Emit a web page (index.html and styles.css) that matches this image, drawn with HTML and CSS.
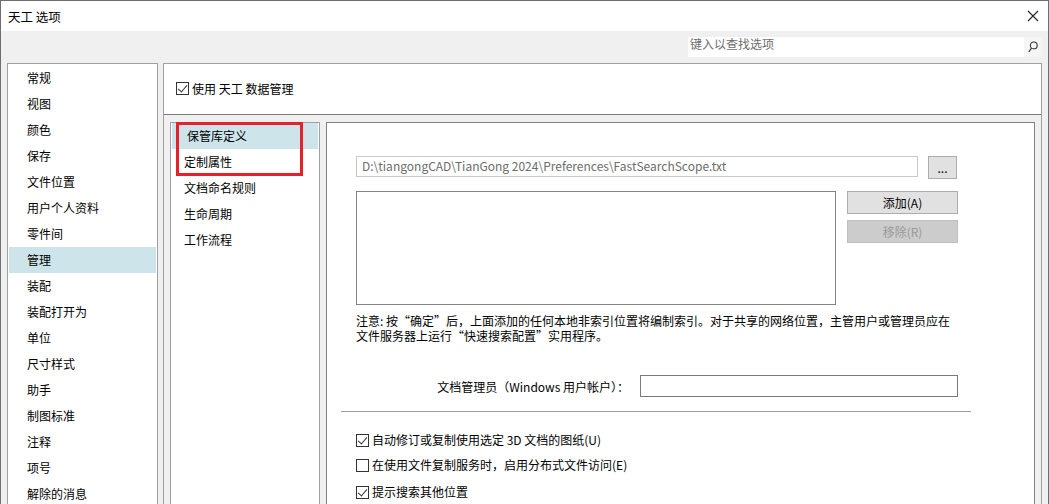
FILE: index.html
```html
<!DOCTYPE html>
<html lang="zh-CN">
<head>
    <meta charset="UTF-8">
    <title>天工 选项</title>
    <link rel="stylesheet" href="styles.css">
</head>
<body>
    <div class="titlebar">
        <span class="title">天工 选项</span>
        <svg class="close-icon" width="12" height="12" viewBox="0 0 12 12">
            <path d="M1 1 L11 11 M11 1 L1 11" stroke="#222" stroke-width="1.1" fill="none"/>
        </svg>
    </div>
    <div class="toolbar">
        <div class="search-box">
            <span class="search-text">键入以查找选项</span>
            <span class="search-btn">
                <svg width="10" height="12" viewBox="0 0 10 12">
                    <circle cx="5.8" cy="4.4" r="3.4" stroke="#333" stroke-width="1.1" fill="none"/>
                    <path d="M3.6 7 L0.8 10.8" stroke="#333" stroke-width="1.2"/>
                </svg>
            </span>
        </div>
    </div>
    <div class="main">
        <div class="nav-panel">
            <div class="nav-item">常规</div>
            <div class="nav-item">视图</div>
            <div class="nav-item">颜色</div>
            <div class="nav-item">保存</div>
            <div class="nav-item">文件位置</div>
            <div class="nav-item">用户个人资料</div>
            <div class="nav-item">零件间</div>
            <div class="nav-item selected">管理</div>
            <div class="nav-item">装配</div>
            <div class="nav-item">装配打开为</div>
            <div class="nav-item">单位</div>
            <div class="nav-item">尺寸样式</div>
            <div class="nav-item">助手</div>
            <div class="nav-item">制图标准</div>
            <div class="nav-item">注释</div>
            <div class="nav-item">项号</div>
            <div class="nav-item">解除的消息</div>
        </div>
        <div class="content-panel">
            <div class="content-head">
                <label class="check-row">
                    <span class="check checked"></span>使用 天工 数据管理
                </label>
            </div>
            <div class="content-body">
                <div class="sub-nav">
                    <div class="sub-item selected">保管库定义</div>
                    <div class="sub-item">定制属性</div>
                    <div class="sub-item">文档命名规则</div>
                    <div class="sub-item">生命周期</div>
                    <div class="sub-item">工作流程</div>
                    <div class="highlight-box"></div>
                </div>
                <div class="sub-page">
                    <div class="path-row">
                        <div class="path-field">D:\tiangongCAD\TianGong 2024\Preferences\FastSearchScope.txt</div>
                        <button class="btn btn-browse">...</button>
                    </div>
                    <div class="list-row">
                        <div class="list-box"></div>
                        <div class="list-buttons">
                            <button class="btn">添加(A)</button>
                            <button class="btn disabled">移除(R)</button>
                        </div>
                    </div>
                    <p class="note">注意: 按“确定”后，上面添加的任何本地非索引位置将编制索引。对于共享的网络位置，主管用户或管理员应在<br>文件服务器上运行“快速搜索配置”实用程序。</p>
                    <div class="admin-row">
                        <span class="admin-label">文档管理员（Windows 用户帐户）：</span>
                        <div class="admin-field"></div>
                    </div>
                    <div class="divider"></div>
                    <label class="check-row opt first">
                        <span class="check checked"></span>自动修订或复制使用选定 3D 文档的图纸(U)
                    </label>
                    <label class="check-row opt">
                        <span class="check"></span>在使用文件复制服务时，启用分布式文件访问(E)
                    </label>
                    <label class="check-row opt last">
                        <span class="check checked"></span>提示搜索其他位置
                    </label>
                </div>
            </div>
        </div>
    </div>
</body>
</html>
```

FILE: styles.css
```css
* {
    box-sizing: border-box;
}
html, body {
    margin: 0;
    height: 504px;
    overflow: hidden;
}
body {
    font-family: "Noto Sans CJK SC", "Noto Sans", sans-serif;
    font-size: 12px;
    color: #000;
    background-color: #f0f0f0;
    border: 1px solid #6e6e6e;
    border-bottom: none;
    display: flex;
    flex-direction: column;
}
.titlebar {
    height: 30px;
    flex: none;
    background-color: #fff;
    display: flex;
    align-items: center;
    justify-content: space-between;
    padding: 0 9px 0 7px;
}
.title {
    font-size: 12.5px;
}
.close-icon {
    margin-top: -1px;
}
.toolbar {
    height: 32px;
    flex: none;
    display: flex;
    justify-content: flex-end;
    padding: 6px 6px 0 0;
}
.search-box {
    width: 354px;
    height: 20px;
    background-color: #fff;
    display: flex;
    align-items: center;
    justify-content: space-between;
    padding-left: 2px;
}
.search-text {
    color: #6d6d6d;
    line-height: 20px;
    margin-top: -6px;
}
.search-btn {
    width: 18px;
    height: 20px;
    background-color: #f5f5f5;
    display: flex;
    align-items: center;
    justify-content: center;
}
.main {
    flex: 1;
    display: flex;
    gap: 5px;
    padding: 0 6px;
    min-height: 0;
}
.nav-panel {
    width: 151px;
    flex: none;
    background-color: #fff;
    border: 1px solid #a0a0a0;
    border-bottom: none;
    padding: 1px 1px 0;
}
.nav-item {
    height: 26px;
    line-height: 26px;
    padding-left: 18px;
}
.nav-item.selected {
    background-color: #cde5ea;
}
.content-panel {
    flex: 1;
    border: 1px solid #a0a0a0;
    border-bottom: none;
    display: flex;
    flex-direction: column;
}
.content-head {
    height: 51px;
    flex: none;
    background-color: #fff;
    border-bottom: 1px solid #7a7a7a;
    display: flex;
    align-items: center;
    padding: 0 0 1px 12px;
}
.check-row {
    display: flex;
    align-items: center;
    gap: 3px;
    line-height: 20px;
}
.check {
    width: 13px;
    height: 13px;
    flex: none;
    border: 1px solid #333;
    background-color: #fff;
    position: relative;
}
.check.checked::after {
    content: "";
    position: absolute;
    left: 3px;
    top: 0px;
    width: 4px;
    height: 8px;
    border-right: 1px solid #333;
    border-bottom: 1px solid #333;
    transform: rotate(40deg);
}
.content-body {
    flex: 1;
    display: flex;
    gap: 6px;
    padding: 7px 6px 0;
    min-height: 0;
}
.sub-nav {
    width: 150px;
    flex: none;
    background-color: #fff;
    border: 1px solid #a0a0a0;
    border-bottom: none;
    padding: 0 1px;
    position: relative;
}
.sub-item {
    height: 26px;
    line-height: 26px;
    padding-left: 12px;
}
.sub-item.selected {
    background-color: #cde5ea;
    padding-left: 15px;
}
.highlight-box {
    position: absolute;
    left: 5px;
    top: -1px;
    width: 127px;
    height: 54px;
    border: 3px solid #e8202a;
}
.sub-page {
    flex: 1;
    background-color: #fff;
    border: 1px solid #828282;
    border-bottom: none;
    padding: 33px 0 0 29px;
}
.path-row {
    display: flex;
    align-items: flex-start;
    gap: 10px;
}
.path-field {
    width: 562px;
    height: 21px;
    border: 1px solid #c8c8c8;
    color: #6d6d6d;
    line-height: 18px;
    padding-left: 5px;
    white-space: nowrap;
    overflow: hidden;
}
.btn {
    font-family: inherit;
    font-size: 12px;
    color: #000;
    background-color: #e1e1e1;
    border: 1px solid #adadad;
    height: 23px;
    padding: 0;
    line-height: 20px;
}
.btn-browse {
    width: 29px;
    line-height: 16px;
}
.btn.disabled {
    background-color: #cccccc;
    border-color: #bfbfbf;
    color: #9a9a9a;
}
.list-row {
    display: flex;
    align-items: flex-start;
    gap: 11px;
    margin-top: 12px;
}
.list-box {
    width: 480px;
    height: 114px;
    border: 1px solid #828282;
}
.list-buttons {
    display: flex;
    flex-direction: column;
    gap: 6px;
}
.list-buttons .btn {
    width: 111px;
}
.note {
    margin: 8px 0 0;
    line-height: 15px;
    white-space: nowrap;
}
.admin-row {
    width: 602px;
    display: flex;
    justify-content: flex-end;
    align-items: center;
    gap: 11px;
    margin-top: 32px;
}
.admin-field {
    width: 318px;
    height: 22px;
    border: 1px solid #7a7a7a;
}
.divider {
    height: 1px;
    background-color: #a0a0a0;
    margin: 14px 0 0 -15px;
    width: 630px;
}
.opt {
    margin-top: 5px;
}
.opt.first {
    margin-top: 18px;
}
.opt.last {
    margin-top: 7px;
}
```
